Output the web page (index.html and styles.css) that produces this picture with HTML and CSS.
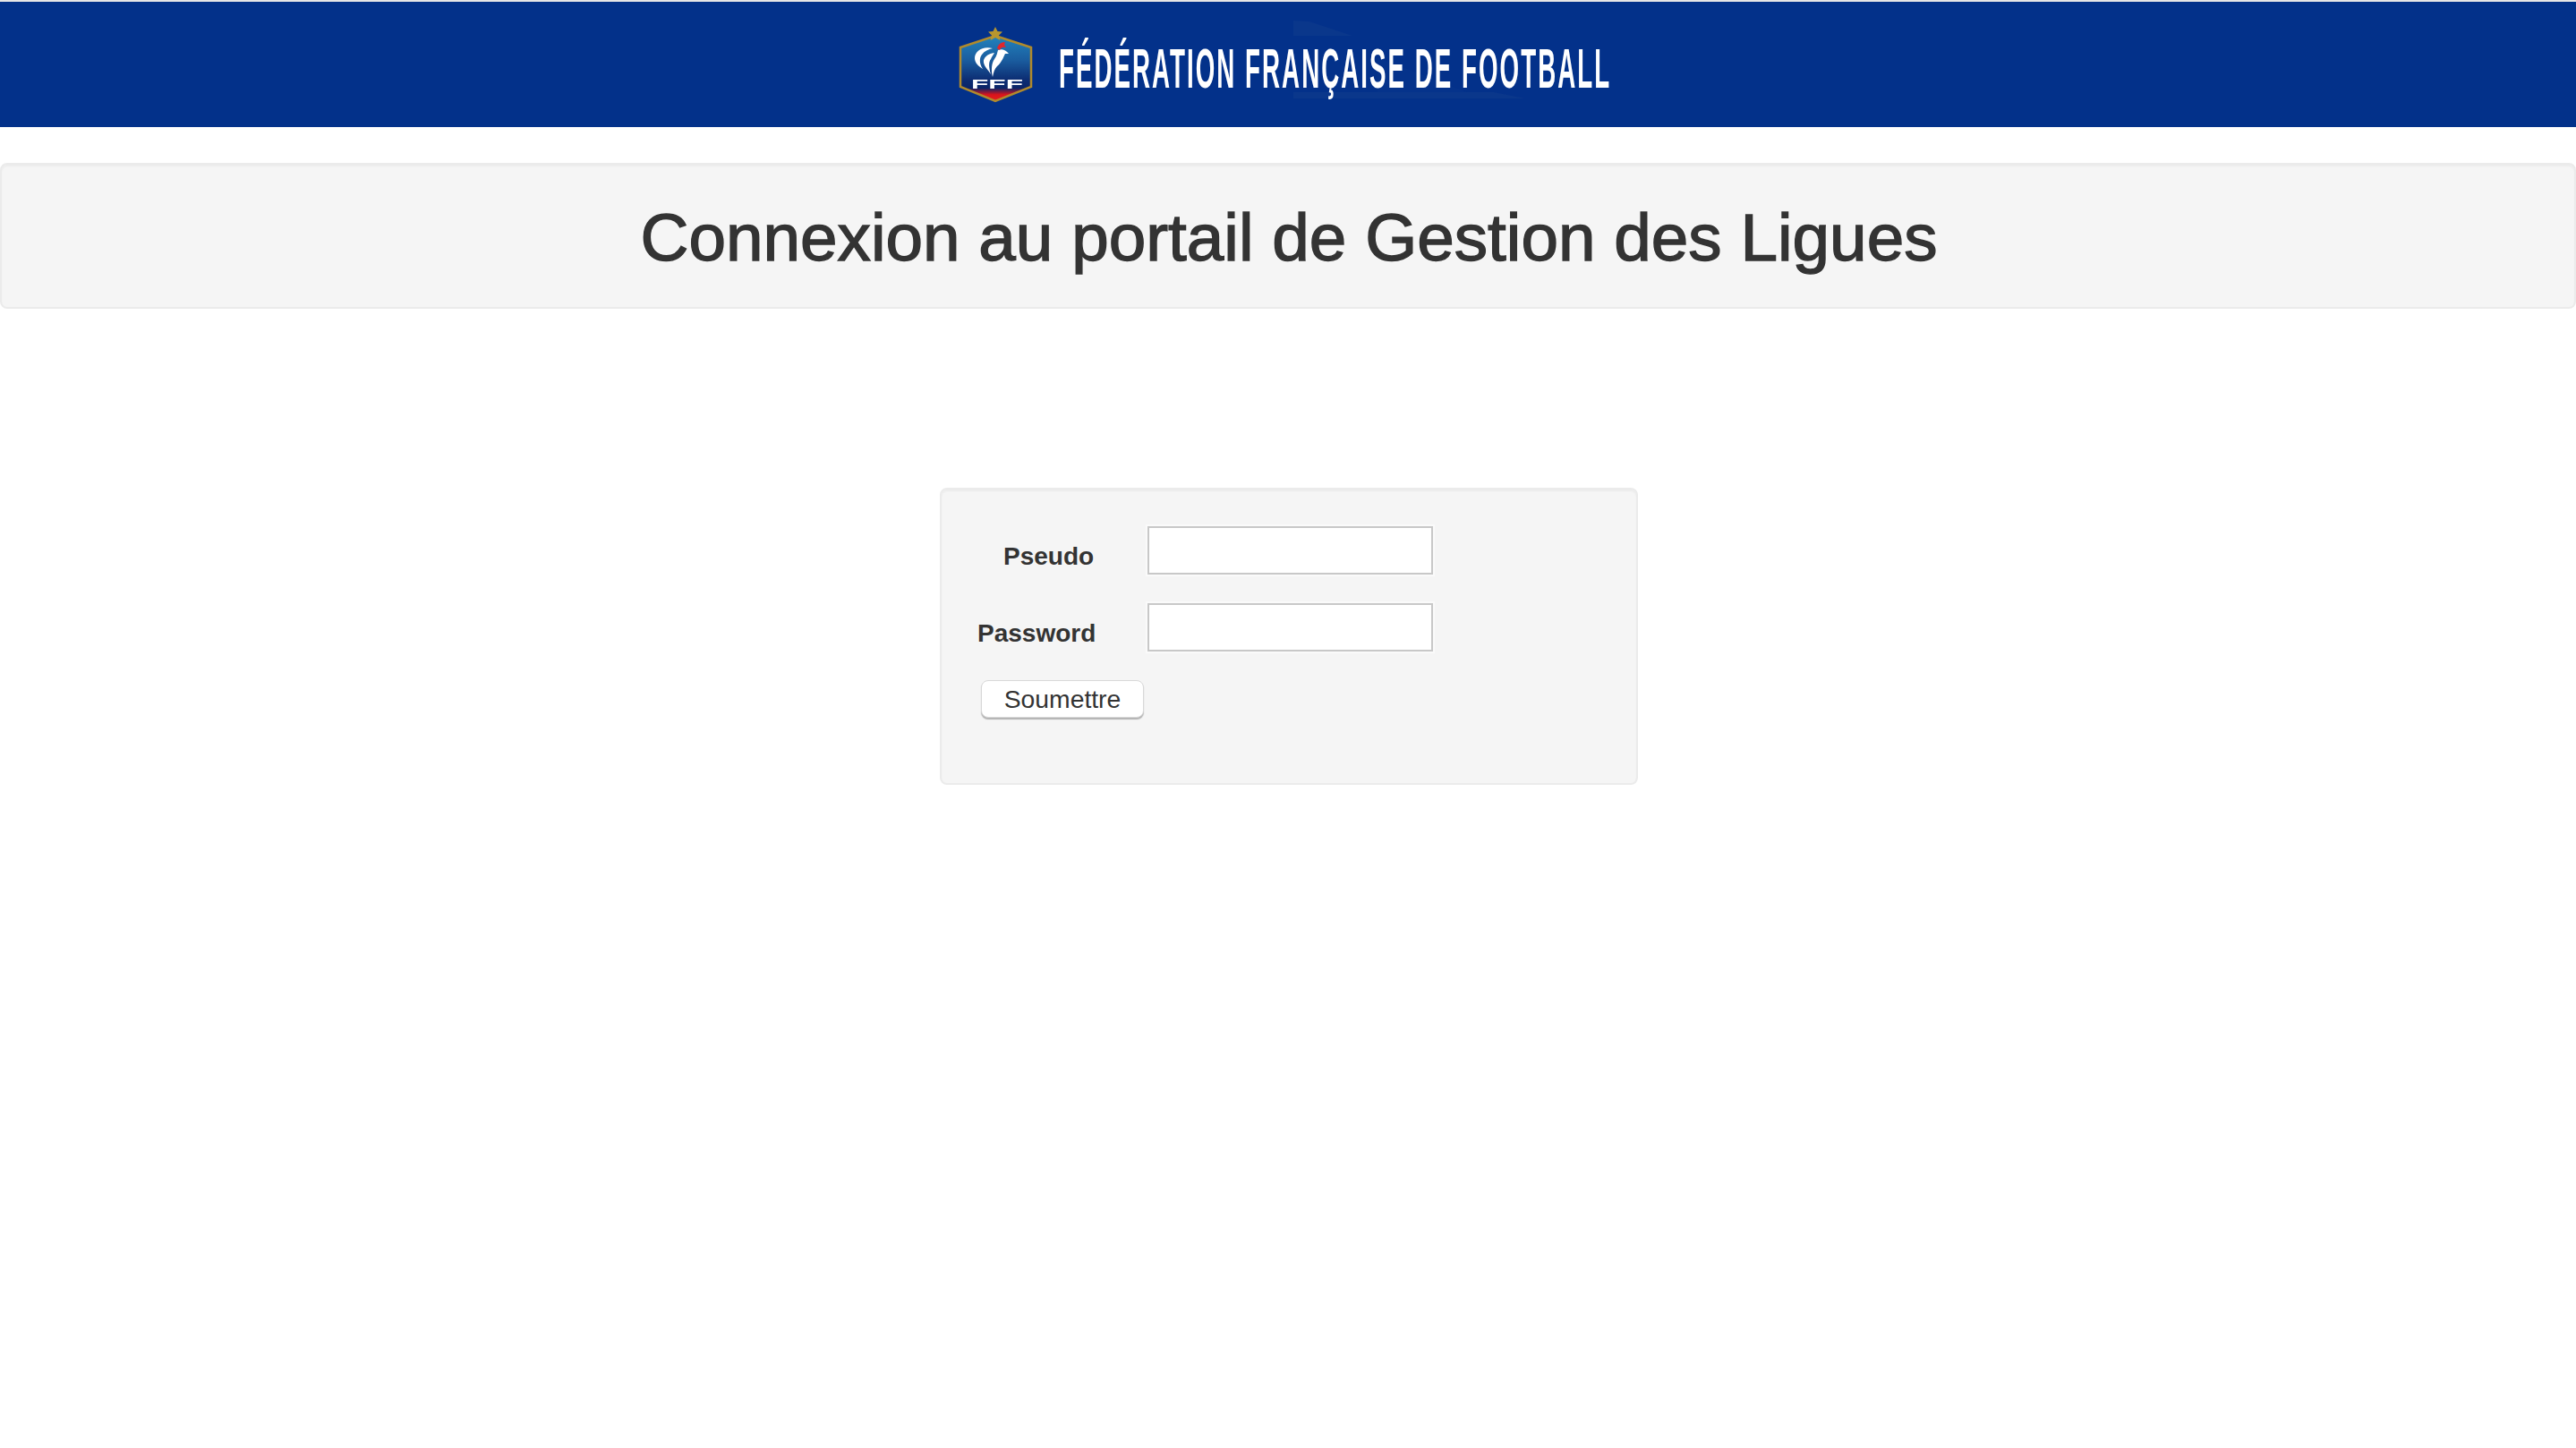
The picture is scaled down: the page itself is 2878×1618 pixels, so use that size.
FILE: index.html
```html
<!DOCTYPE html>
<html lang="fr">
<head>
    <meta charset="UTF-8">
    <meta name="viewport" content="width=device-width, initial-scale=1.0">
    <title>Connexion au portail de Gestion des Ligues</title>
    <link rel="stylesheet" href="styles.css">
</head>
<body>
    <header class="banner">
        <svg class="banner-logo" viewBox="1060 2 760 140" width="760" height="140">
            <defs>
                <linearGradient id="shield" x1="0" y1="0" x2="0" y2="1">
                    <stop offset="0" stop-color="#2283bd"/>
                    <stop offset="0.38" stop-color="#1a5c9e"/>
                    <stop offset="0.68" stop-color="#0c2c72"/>
                    <stop offset="0.8" stop-color="#0a2468"/>
                    <stop offset="0.9" stop-color="#d8141c"/>
                    <stop offset="1" stop-color="#e8201c"/>
                </linearGradient>
            </defs>
            <!-- filigrane -->
            <path class="watermark" d="M1446 23 L1464 24 L1512 40 L1446 40 Z"/>
            <path class="watermark" d="M1446 103 L1670 103 L1705 110 L1446 110 Z"/>
            <path class="watermark faint" d="M1540 64 L1640 103 L1540 103 Z"/>
            <!-- ecusson -->
            <g class="crest">
                <path d="M1113 40 L1153 53 L1153 97 L1113 113 L1074 97 L1074 53 Z" fill="url(#shield)" stroke="#b08a2c" stroke-width="2.5"/>
                <path d="M1113 30 L1115.500 35 L1121 35.500 L1117 39.500 L1118.500 45 L1113 42 L1107.500 45 L1109 39.500 L1105 35.500 L1110.500 35 Z" fill="#b8962e"/>
                <path d="M1110 54 C1099 51 1090 57 1090 65 C1090 70 1094 74 1099 77 C1095 71 1095 65 1098 61 C1101 57 1105 55 1110 54 Z" fill="#fff"/>
                <path d="M1112 59 C1105 60 1099 64 1100 70 C1101 75 1105 78 1108 83 C1106 76 1105 70 1108 66 C1109 63 1111 61 1112 59 Z" fill="#fff"/>
                <path d="M1116 56 C1120 54 1125 56 1128 60 L1124 60 C1122 64 1120 70 1115 74 C1112 77 1111 81 1110 86 C1108 78 1109 70 1112 66 C1115 62 1115 59 1116 56 Z" fill="#fff"/>
                <path d="M1115 54 C1116 50 1119 47 1124 47 L1123 50 L1125 53 C1121 52 1119 53 1118 56 Z" fill="#e0262c"/>
                <text class="crest-text" x="1086" y="99" textLength="58" lengthAdjust="spacingAndGlyphs">FFF</text>
            </g>
            <text class="banner-title" transform="translate(1184 98) scale(0.44 1)" textLength="1398" lengthAdjust="spacing">FÉDÉRATION FRANÇAISE DE FOOTBALL</text>
        </svg>
    </header>

    <div class="well hero">
        <h1>Connexion au portail de Gestion des Ligues</h1>
    </div>

    <div class="login-wrap">
        <form class="well login">
            <div class="row">
                <label class="pseudo" for="pseudo">Pseudo</label>
                <input type="text" id="pseudo">
            </div>
            <div class="row">
                <label for="password">Password</label>
                <input type="password" id="password">
            </div>
            <button type="button">Soumettre</button>
        </form>
    </div>
</body>
</html>
```

FILE: styles.css
```css
body {
    margin: 0;
    font-family: "Liberation Sans", Arial, sans-serif;
    color: #333;
    background: #fff;
}
.banner {
    border-top: 2px solid #e6e6e6;
    height: 140px;
    background: #03318a;
    display: flex;
    justify-content: center;
}
.banner-logo {
    display: block;
    overflow: visible;
}
.watermark {
    fill: #0a378b;
}
.faint {
    opacity: 0.4;
}
.crest {
    filter: blur(0.7px);
}
.crest-text {
    font-family: "Liberation Sans", Arial, sans-serif;
    font-weight: bold;
    font-size: 15px;
    fill: #fff;
}
.banner-title {
    font-family: "Liberation Sans", Arial, sans-serif;
    font-weight: bold;
    font-size: 63px;
    fill: #fff;
    filter: blur(0.5px);
}
.well {
    box-sizing: border-box;
    background: #f5f5f5;
    border: 2px solid #ebebeb;
    border-radius: 8px;
    box-shadow: inset 0 2px 2px rgba(0, 0, 0, 0.04);
}
.hero {
    margin-top: 40px;
    height: 163px;
    display: flex;
    align-items: center;
    justify-content: center;
}
h1 {
    margin: 2px 0 0 2px;
    font-size: 74.7px;
    font-weight: normal;
    -webkit-text-stroke: 1.4px #333;
}
.login-wrap {
    display: flex;
    justify-content: center;
    padding-left: 2px;
    margin-top: 200px;
}
.login {
    width: 780px;
    height: 332px;
    padding: 41px 0 0 41px;
}
.row {
    display: flex;
    align-items: flex-end;
    margin-bottom: 32px;
}
label {
    width: 188px;
    margin-left: -1px;
    font-size: 28px;
    font-weight: bold;
    line-height: 32px;
    padding-bottom: 4px;
    margin-right: 2px;
}
.pseudo {
    width: 159px;
    padding-left: 29px;
}
input {
    box-sizing: border-box;
    width: 319px;
    height: 54px;
    margin: 0;
    padding: 0;
    background: #fff;
    border: 2px solid #c8c8c8;
    outline: 2px solid #fafafa;
    outline-offset: 0;
}
button {
    box-sizing: border-box;
    display: block;
    width: 182px;
    height: 42px;
    margin: 1px 0 0 3px;
    padding: 1px 0 0;
    font-family: "Liberation Sans", Arial, sans-serif;
    font-size: 28.300px;
    color: #333;
    background: #fff;
    border: 1px solid #d8d8d8;
    border-radius: 8px;
    box-shadow: 0 2px 1px #b4b4b4;
}
```
